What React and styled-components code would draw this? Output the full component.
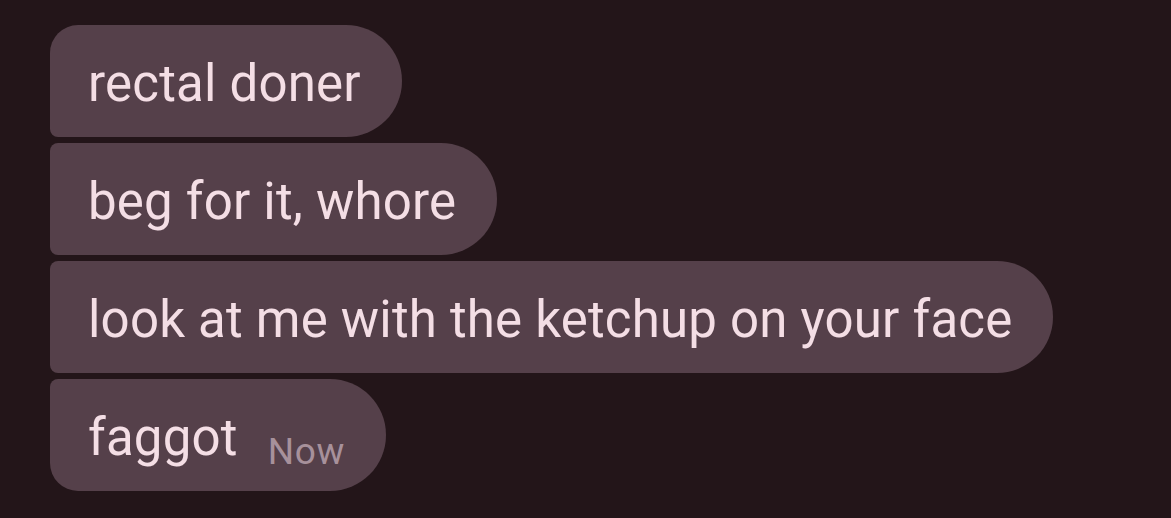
import React from 'react';
import styled, { createGlobalStyle } from 'styled-components';

const GlobalStyle = createGlobalStyle`
  html, body {
    margin: 0;
    background: #231519;
    font-family: Roboto, 'Noto Sans', sans-serif;
  }
`;

const Thread = styled.div`
  display: flex;
  flex-direction: column;
  align-items: flex-start;
  gap: 6px;
  padding: 25px 0 0 50px;
  min-height: 518px;
  box-sizing: border-box;
`;

const Bubble = styled.div`
  display: flex;
  align-items: baseline;
  gap: 30px;
  box-sizing: border-box;
  height: 112px;
  padding: 6px 41px 0 38px;
  line-height: 106px;
  background: #55404a;
  color: #f4dee5;
  font-size: 51px;
  letter-spacing: 0.2px;
  border-radius: ${({ $first }) => ($first ? '28px' : '8px')} 56px 56px
    ${({ $last }) => ($last ? '28px' : '8px')};
`;

const Time = styled.span`
  font-size: 37px;
  letter-spacing: 0.6px;
  color: #a7919b;
  position: relative;
  top: 9px;
`;

const messages = [
  'rectal doner',
  'beg for it, whore',
  'look at me with the ketchup on your face',
  'faggot',
];

const App = () => (
  <>
    <GlobalStyle />
    <Thread>
      {messages.map((text, i) => (
        <Bubble key={i} $first={i === 0} $last={i === messages.length - 1}>
          {text}
          {i === messages.length - 1 && <Time>Now</Time>}
        </Bubble>
      ))}
    </Thread>
  </>
);

export default App;
